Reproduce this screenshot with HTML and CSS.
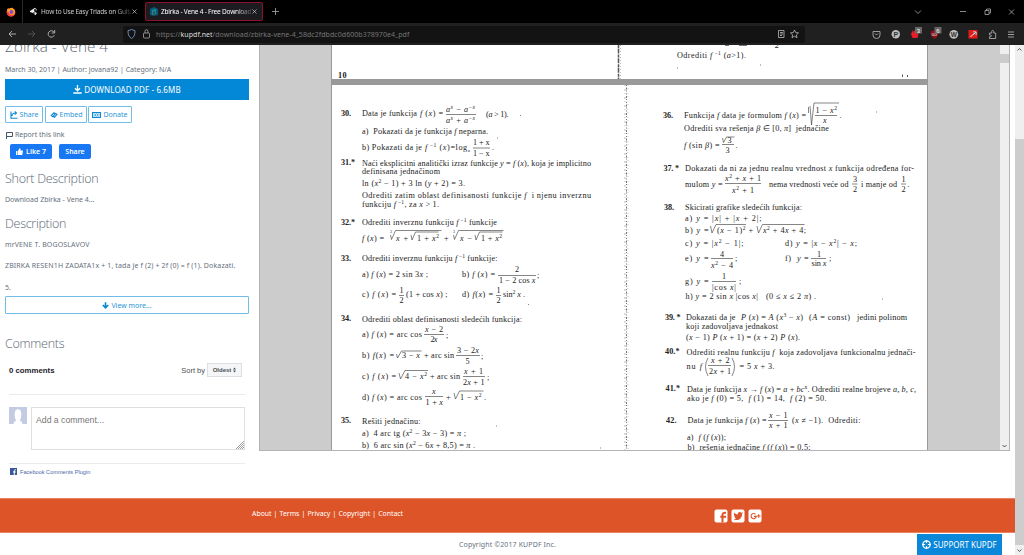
FILE: index.html
```html
<!DOCTYPE html>
<html lang="en">
<head>
<meta charset="utf-8">
<title>Zbirka - Vene 4 - Free Download PDF</title>
<link rel="stylesheet" href="styles.css">
</head>
<body>
<header class="tabs">
  <div class="fx"><svg width="10" height="10" viewBox="0 0 10 10"><circle cx="5" cy="5.2" r="4.3" fill="#ff7a1c"/><path d="M1 3 2 1l1.500 1.500L6 .6l3 3-.5 3-3 2.500-3.500-1z" fill="#ff9d1e"/><path d="M.8 5a4.300 4.300 0 0 0 8.500 1C8 9 3 9 2.500 5z" fill="#f5304c"/><circle cx="5.400" cy="5" r="1.900" fill="#8a45d8"/></svg></div>
  <div class="tab"><svg width="9" height="9" viewBox="0 0 9 9"><path d="M1 4 6 .8 8 3 5 4.500 8 6 6.500 8.300 4 6 1 5z" fill="#eee"/><circle cx="6" cy="3" r="1" fill="#000"/><circle cx="5" cy="6" r=".8" fill="#000"/></svg><span class="tab-title t1">How to Use Easy Triads on Guita</span><svg class="x" width="5" height="5" viewBox="0 0 5 5"><path d="M.5.5l4 4m0-4l-4 4"/></svg></div>
  <div class="tab active"><svg width="8" height="9" viewBox="0 0 8 9"><path d="M4 0 8 2v6L4 9 0 8V2z" fill="#075b73"/><path d="M2 3l4-1v5l-4 1z" fill="#148ba0"/><path d="M3 4h2v4H3z" fill="#4a4f4f"/></svg><span class="tab-title t2">Zbirka - Vene 4 - Free Download</span><svg class="x" width="5" height="5" viewBox="0 0 5 5"><path d="M.5.5l4 4m0-4l-4 4"/></svg></div>
  <svg class="plus" width="7" height="7" viewBox="0 0 7 7"><path d="M3.500 0v7M0 3.500h7"/></svg>
  <svg class="win" width="110" height="12" viewBox="0 0 110 12"><path d="M5 4.500l3 3 3-3M50 5.500h6M75 4.500h4v4h-4zM76.500 4.500v-1.500h4v4h-1.500M99 3.500l5 5m0-5l-5 5"/></svg>
</header>
<nav class="bar">
  <svg class="nav" width="60" height="12" viewBox="0 0 60 12"><path d="M16 6H9m3-3L9 6l3 3" stroke="#bbb"/><path d="M28 6h7m-3-3l3 3-3 3" stroke="#555"/><path d="M54 4.200A3.200 3.200 0 1 0 54.300 7.200M54.700 2v3h-3" stroke="#bbb"/></svg>
  <div class="url">
    <svg width="28" height="12" viewBox="0 0 28 12"><path d="M8.500 1.500 12 2.700C12 7 11 9 8.500 10.500 6 9 5 7 5 2.700z" stroke="#7fa6d6"/><rect x="20.500" y="5" width="6" height="5" rx=".8" stroke="#aaa"/><path d="M22 5V3.200a1.500 1.500 0 0 1 3 0V5" stroke="#aaa"/></svg>
    <span class="addr">https://<b>kupdf.net</b>/download/zbirka-vene-4_58dc2fdbdc0d600b378970e4_pdf</span>
    <svg class="urlend" width="26" height="12" viewBox="0 0 26 12"><path d="M2.500 2.500h5.500v7H2.500zM4 4.500h3M4 6h3M4 7.500h2M18.500 2l1.200 2.600 2.800.3-2.100 1.900.6 2.900-2.500-1.500L16 9.700l.6-2.900-2.100-1.900 2.800-.3z" stroke="#bbb"/></svg>
  </div>
  <svg class="ext" width="153" height="16" viewBox="0 0 153 16"><g fill="none" stroke="#aaa"><path d="M2 5.500h7V9a3.500 3.500 0 0 1-7 0zM4 7.500l1.500 1.500L7 7.500"/><path d="M118.500 7h2.200V5.500a1 1 0 0 1 2 0V7h2v5.500h-6.200v-1.800h1a.8.8 0 0 0 0-1.800h-1z"/><path d="M137 6h6M137 8.500h6M137 11h6"/></g><circle cx="24.800" cy="8.300" r="4.200" fill="#bbb"/><text x="22.600" y="11" font-size="7" fill="#333" font-weight="bold">P</text><path d="M40 8l2-4 1 3V4l2 2 1-1 1.500 3-1 4h-5z" fill="#e81c24"/><rect x="44" y="1" width="7" height="6.500" fill="#666"/><text x="45.800" y="6.500" font-size="6" fill="#fff">3</text><path d="M59.500 5.500 63.500 4l4 1.500c0 4-1.500 6-4 7.500-2.500-1.500-4-3.500-4-7.500z" fill="#8d1018"/><text x="60.600" y="10" font-size="5" fill="#ddd">uo</text><rect x="63.500" y="1" width="7" height="6.500" fill="#666"/><text x="65.300" y="6.500" font-size="6" fill="#fff">6</text><circle cx="82.800" cy="8.300" r="4.400" fill="#bbb"/><text x="79.700" y="10.700" font-size="6.500" fill="#333" font-weight="bold">W</text><rect x="97.500" y="4" width="9" height="8.500" fill="#e21c1c"/><path d="M99.500 11l3.500-3.500M102 6h3v3M102.500 8.500l2-2" stroke="#fff"/></svg>
</nav>
<div class="view">
 <div class="page">
  <main class="cols">
   <aside class="side">
    <h1>Zbirka - Vene 4</h1>
    <p class="meta">March 30, 2017 | Author: jovana92 | Category: N/A</p>
    <a class="dl"><svg width="9" height="9" viewBox="0 0 9 9"><path d="M4.500 0v5.500M2 3.300l2.500 2.500L7 3.300M.3 8h8.400" stroke="#fff" stroke-width="1.300" fill="none"/></svg><span>DOWNLOAD PDF - 6.6MB</span></a>
    <div class="btns">
     <a class="ob w1"><svg width="8" height="8" viewBox="0 0 8 8"><path d="M1 .5V7.300h6.500M2 5c0-2 1-3 3.500-3M4.700.5 6.500 2 4.700 3.700" stroke="#0a86d4" stroke-width="1.100" fill="none"/></svg><span>Share</span></a>
     <a class="ob w2"><svg width="8" height="8" viewBox="0 0 8 8"><path d="M1.300 4.500 4 1.800l1.300 1-2.500 3zM3.200 5.300 5.500 2.500l1.500.8-2.500 3z" stroke="#0a86d4" stroke-width="1.100" fill="none"/></svg><span>Embed</span></a>
     <a class="ob w3"><svg width="9" height="8" viewBox="0 0 9 8"><rect x=".5" y="1.500" width="8" height="5" stroke="#0a86d4" fill="none"/><circle cx="4.500" cy="4" r="1.300" stroke="#0a86d4" stroke-width=".8" fill="none"/><path d="M2 2v4M7 2v4" stroke="#0a86d4" stroke-width=".6"/></svg><span>Donate</span></a>
    </div>
    <p class="report"><svg width="8" height="8" viewBox="0 0 8 8"><path d="M1.500 8V1.500h6v4h-6" stroke="#44546b" fill="none"/></svg><span>Report this link</span></p>
    <div class="fb"><a class="like"><svg width="7" height="7" viewBox="0 0 7 7"><path d="M0 3h1.500v4H0zM2 3 3.500.3l1 .2V2.500H7L6.300 7H2z" fill="#fff"/></svg><span>Like 7</span></a><a class="shr">Share</a></div>
    <h2 class="h-a">Short Description</h2>
    <p class="p-a">Download Zbirka - Vene 4...</p>
    <h2 class="h-b">Description</h2>
    <p class="p-b">mrVENE T. BOGOSLAVOV</p>
    <p class="p-c">ZBIRKA RESEN1H ZADATA1x + 1, tada je f (2) + 2f (0) = f (1). Dokazati.</p>
    <p class="p-d">5.</p>
    <a class="more"><svg width="7" height="7" viewBox="0 0 7 7"><path d="M3.500.3v5M.8 3l2.700 2.800L6.200 3" stroke="#0a86d4" stroke-width="1.600" fill="none"/></svg><span>View more...</span></a>
    <h2 class="h-c">Comments</h2>
    <section class="fbc">
     <div class="chead"><b>0 comments</b><span class="sort">Sort by</span><span class="sel">Oldest <svg width="3" height="6" viewBox="0 0 3 6"><path d="M0 2.500 1.500.5 3 2.500zM0 3.500h3L1.500 5.500z" fill="#4b4f56"/></svg></span></div>
     <div class="cbox"><svg width="18" height="17" viewBox="0 0 18 17"><path fill="#c3cbe2" d="M0 0h18v17H0z"/><path d="M4.500 17c.3-2 1-2.500 2.500-3.500C5 9 5 2.300 9 2.300S13 9 11 13.500c1.500 1 2.200 1.500 2.500 3.500z" fill="#fff"/></svg><div class="ta">Add a comment...<svg width="8" height="8" viewBox="0 0 8 8"><path d="M0 8l8-8M2 8l6-6M4 8l4-4M6 8l2-2" stroke="#888" stroke-width=".8"/></svg></div></div>
     <div class="plug"><svg width="7" height="7" viewBox="0 0 7 7"><path fill="#3b5998" d="M0 0h7v7H0z"/><path d="M4.300 7V2.700q0-1 1.500-1M3 4h2.800" stroke="#fff" fill="none"/></svg><span>Facebook Comments Plugin</span></div>
    </section>
   </aside>
   <section class="viewer">
    <div class="sheets">
     <svg class="sheet top" width="595" height="34" viewBox="332 45 595 34">
      <text x="338" y="78" class="b" textLength="8.500">10</text>
      <text x="677" y="58" textLength="69">Odrediti <tspan class="i">f</tspan><tspan class="s"> −1</tspan> (<tspan class="i">a</tspan>&gt;1).</text>
      <text x="775" y="48" class="i">2</text>
      <path d="M902.500 74.500v2.500M907.500 75v2" stroke="#555"/>
      <path d="M618.500 45v34" stroke="#555" stroke-width="1.500" stroke-dasharray="3 .6 5 1"/><path d="M620.500 45v34" stroke="#bbb" stroke-dasharray="1 2"/>
      <path d="M725 45.500h4M739 45.500h8M760 65h1M677 68h1" stroke="#777"/>
     </svg>
     <svg class="sheet" width="595" height="366" viewBox="332 85 595 366">
      <g class="spine"><path d="M626.500 85v366" stroke="#777" stroke-dasharray="1 1.500 2 1 1 2"/><path d="M625 85v366" stroke="#bbb" stroke-dasharray="1 3 2 2"/><path d="M628 85v366" stroke="#ccc" stroke-dasharray="1 2 1 4"/></g>
      <g class="b">
       <text x="341" y="116" textLength="10">30.</text><text x="341" y="165" textLength="14">31.*</text><text x="341" y="225" textLength="14">32.*</text><text x="341" y="261" textLength="10">33.</text><text x="341" y="321" textLength="10">34.</text><text x="341" y="423" textLength="10">35.</text>
       <text x="663" y="118" textLength="10">36.</text><text x="663.500" y="171" textLength="15.500">37. *</text><text x="664" y="210" textLength="10">38.</text><text x="665" y="320" textLength="15.500">39. *</text><text x="665" y="354" textLength="14.500">40.*</text><text x="665.500" y="391" textLength="14.500">41.*</text><text x="666" y="423" textLength="10.500">42.</text>
      </g>
      <text x="362" y="116" textLength="55">Data je funkcija</text><text x="420" y="116" textLength="23"><tspan class="i">f</tspan> (<tspan class="i">x</tspan>) =</text>
      <text x="446" y="111.500" class="i" textLength="29">a<tspan class="s">x</tspan> − a<tspan class="s">−x</tspan></text><text x="446" y="123" class="i" textLength="29">a<tspan class="s">x</tspan> + a<tspan class="s">−x</tspan></text>
      <text x="486" y="117" textLength="22.500">(<tspan class="i">a</tspan> &gt; 1).</text>
      <text x="362" y="133.500" textLength="126">a)&#160; Pokazati da je funkcija <tspan class="i">f</tspan> neparna.</text>
      <text x="362" y="150" textLength="60">b) Pokazati da je</text><text x="425" y="150" textLength="45"><tspan class="i">f</tspan><tspan class="s"> −1</tspan> (<tspan class="i">x</tspan>)=log<tspan class="u">a</tspan></text>
      <text x="473" y="144.500" textLength="16.500">1 + x</text><text x="473" y="155.500" textLength="16.500">1 − x</text><text x="492" y="150">.</text>
      <text x="362" y="165.500" textLength="229">Naći eksplicitni analitički izraz funkcije <tspan class="i">y</tspan> = <tspan class="i">f</tspan> (<tspan class="i">x</tspan>), koja je implicitno</text>
      <text x="362" y="174" textLength="78">definisana jednačinom</text>
      <text x="362" y="186" textLength="103">ln (<tspan class="i">x</tspan><tspan class="s">2</tspan> − 1) + 3 ln (<tspan class="i">y</tspan> + 2) = 3.</text>
      <text x="362" y="197.500" textLength="229">Odrediti zatim oblast definisanosti funkcije <tspan class="i">f</tspan>&#160; i njenu inverznu</text>
      <text x="362" y="207" textLength="77">funkciju <tspan class="i">f</tspan><tspan class="s"> −1</tspan>, za <tspan class="i">x</tspan> &gt; 1.</text>
      <text x="362" y="225" textLength="135">Odrediti inverznu funkciju <tspan class="i">f</tspan><tspan class="s"> −1</tspan> funkcije</text>
      <text x="362" y="240.500" textLength="22"><tspan class="i">f</tspan> (<tspan class="i">x</tspan>) =</text>
      <text x="396" y="240.500" textLength="12"><tspan class="i">x</tspan> +</text><text x="417" y="240.500" textLength="22">1 + <tspan class="i">x</tspan><tspan class="s">2</tspan></text><text x="444" y="240.500">+</text><text x="460" y="240.500" textLength="12"><tspan class="i">x</tspan> −</text><text x="481" y="240.500" textLength="21">1 + <tspan class="i">x</tspan><tspan class="s">2</tspan></text>
      <text x="390" y="233" class="n">3</text><text x="453" y="233" class="n">3</text>
      <text x="362" y="261" textLength="135.500">Odrediti inverznu funkciju <tspan class="i">f</tspan><tspan class="s"> −1</tspan> funkcije:</text>
      <text x="362" y="276.500" textLength="66">a) <tspan class="i">f</tspan> (<tspan class="i">x</tspan>) = 2 sin 3<tspan class="i">x</tspan> ;</text>
      <text x="462" y="276.500" textLength="33">b) <tspan class="i">f</tspan> (<tspan class="i">x</tspan>) =</text><text x="515" y="272">2</text><text x="499" y="282.500" textLength="36.500">1 − 2 cos <tspan class="i">x</tspan></text><text x="537" y="278">;</text>
      <text x="362" y="297" textLength="34">c) <tspan class="i">f</tspan> (<tspan class="i">x</tspan>) =</text><text x="399.500" y="292.500">1</text><text x="399.500" y="302.500">2</text><text x="406" y="297" textLength="41.500">(1 + cos <tspan class="i">x</tspan>) ;</text>
      <text x="462" y="297" textLength="31">d) <tspan class="i">f</tspan>(<tspan class="i">x</tspan>) =</text><text x="496.500" y="292.500">1</text><text x="496.500" y="302.500">2</text><text x="503" y="297" textLength="22">sin<tspan class="s">2</tspan> <tspan class="i">x</tspan> .</text>
      <text x="362" y="321.500" textLength="160">Odrediti oblast definisanosti sledećih funkcija:</text>
      <text x="362" y="337" textLength="60">a) <tspan class="i">f</tspan> (<tspan class="i">x</tspan>) = arc cos</text><text x="425" y="331.500" textLength="18"><tspan class="i">x</tspan> − 2</text><text x="430.500" y="342" textLength="7">2<tspan class="i">x</tspan></text><text x="446" y="338">;</text>
      <text x="362" y="358" textLength="32">b) <tspan class="i">f</tspan>(<tspan class="i">x</tspan>) =</text><text x="402" y="358" textLength="18">3 − <tspan class="i">x</tspan></text><text x="424" y="358" textLength="30">+ arc sin</text><text x="457" y="353" textLength="22">3 − 2<tspan class="i">x</tspan></text><text x="465.500" y="363.500">5</text><text x="481" y="358.500">;</text>
      <text x="362" y="379" textLength="34">c) <tspan class="i">f</tspan> (<tspan class="i">x</tspan>) =</text><text x="405" y="379" textLength="22">4 − <tspan class="i">x</tspan><tspan class="s">2</tspan></text><text x="430" y="379" textLength="30">+ arc sin</text><text x="464" y="374" textLength="19"><tspan class="i">x</tspan> + 1</text><text x="463" y="384.500" textLength="21.500">2<tspan class="i">x</tspan> + 1</text><text x="487" y="380">;</text>
      <text x="362" y="399.500" textLength="60">d) <tspan class="i">f</tspan> (<tspan class="i">x</tspan>) = arc cos</text><text x="432" y="394" class="i">x</text><text x="425.500" y="404.500" textLength="17.500">1 + <tspan class="i">x</tspan></text><text x="446" y="399.500">+</text><text x="460" y="399.500" textLength="21.500">1 − <tspan class="i">x</tspan><tspan class="s">2</tspan></text><text x="484" y="399.500">.</text>
      <text x="362" y="423.500" textLength="58.500">Rešiti jednačinu:</text>
      <text x="362" y="436" textLength="104">a)&#160; 4 arc tg (<tspan class="i">x</tspan><tspan class="s">2</tspan> − 3<tspan class="i">x</tspan> − 3) = <tspan class="i">π</tspan> ;</text>
      <text x="362" y="448" textLength="113">b)&#160; 6 arc sin (<tspan class="i">x</tspan><tspan class="s">2</tspan> − 6<tspan class="i">x</tspan> + 8,5) = <tspan class="i">π</tspan> .</text>

      <text x="684" y="118" textLength="122">Funkcija <tspan class="i">f</tspan> data je formulom <tspan class="i">f</tspan> (<tspan class="i">x</tspan>) =</text><text x="815.500" y="112.500" textLength="21.500">1 − <tspan class="i">x</tspan><tspan class="s">2</tspan></text><text x="823" y="122.500" class="i">x</text><text x="839.500" y="118">.</text>
      <text x="684" y="131" textLength="145">Odrediti sva rešenja <tspan class="i">β</tspan> ∈ [0, <tspan class="i">π</tspan>]&#160; jednačine</text>
      <text x="684" y="148" textLength="35.500"><tspan class="i">f</tspan> (sin <tspan class="i">β</tspan>) =</text><text x="727.500" y="143">3</text><text x="725.500" y="152.500">3</text><text x="735.500" y="148">.</text>
      <text x="685" y="171" textLength="229">Dokazati da ni za jednu realnu vrednost <tspan class="i">x</tspan> funkcija određena for-</text>
      <text x="685" y="186.500" textLength="37.500">mulom <tspan class="i">y</tspan> =</text><text x="725" y="181" textLength="36"><tspan class="i">x</tspan><tspan class="s">2</tspan> + <tspan class="i">x</tspan> + 1</text><text x="732" y="193" textLength="22"><tspan class="i">x</tspan><tspan class="s">2</tspan> + 1</text>
      <text x="769" y="186.500" textLength="79.500">nema vrednosti veće od</text><text x="853" y="181.500">3</text><text x="853" y="191.500">2</text><text x="861" y="186.500" textLength="36">i manje od</text><text x="901.500" y="181.500">1</text><text x="901.500" y="191.500">2</text><text x="907.500" y="186.500">.</text>
      <text x="685" y="210" textLength="117">Skicirati grafike sledećih funkcija:</text>
      <text x="685" y="221" textLength="76.500">a) <tspan class="i">y</tspan> = |<tspan class="i">x</tspan>| + |<tspan class="i">x</tspan> + 2|;</text>
      <text x="685" y="233" textLength="23.500">b) <tspan class="i">y</tspan> =</text><text x="717" y="233" textLength="28.500">(<tspan class="i">x</tspan> − 1)<tspan class="s">2</tspan></text><text x="748.500" y="233">+</text><text x="763" y="233" textLength="43"><tspan class="i">x</tspan><tspan class="s">2</tspan> + 4<tspan class="i">x</tspan> + 4;</text>
      <text x="685" y="245.500" textLength="58.500">c) <tspan class="i">y</tspan> = |<tspan class="i">x</tspan><tspan class="s">2</tspan> − 1|;</text><text x="785" y="245.500" textLength="72">d) <tspan class="i">y</tspan> = |<tspan class="i">x</tspan> − <tspan class="i">x</tspan><tspan class="s">2</tspan>| − <tspan class="i">x</tspan>;</text>
      <text x="685" y="261" textLength="23.500">e) <tspan class="i">y</tspan> =</text><text x="720" y="256.500">4</text><text x="711" y="267.500" textLength="22"><tspan class="i">x</tspan><tspan class="s">2</tspan> − 4</text><text x="735" y="261">;</text>
      <text x="785" y="261" textLength="23.500">f)&#160; <tspan class="i">y</tspan> =</text><text x="817" y="256.500">1</text><text x="811.500" y="266" textLength="15">sin <tspan class="i">x</tspan></text><text x="829" y="261">;</text>
      <text x="685" y="284" textLength="23.500">g) <tspan class="i">y</tspan> =</text><text x="722" y="278.500">1</text><text x="712" y="289.500" textLength="24">|cos <tspan class="i">x</tspan>|</text><text x="739" y="284">;</text>
      <text x="685.500" y="299" textLength="72.500">h) <tspan class="i">y</tspan> = 2 sin <tspan class="i">x</tspan> |cos <tspan class="i">x</tspan>|</text><text x="766" y="299" textLength="50">(0 ≤ <tspan class="i">x</tspan> ≤ 2 <tspan class="i">π</tspan>) .</text>
      <text x="686" y="320" textLength="49.500">Dokazati da je</text><text x="741" y="320" textLength="62"><tspan class="i">P</tspan> (<tspan class="i">x</tspan>) = <tspan class="i">A</tspan> (<tspan class="i">x</tspan><tspan class="s">3</tspan> − <tspan class="i">x</tspan>)</text><text x="809" y="320" textLength="41">(<tspan class="i">A</tspan> = const)</text><text x="857" y="320" textLength="50">jedini polinom</text>
      <text x="686" y="328.500" textLength="92">koji zadovoljava jednakost</text>
      <text x="686" y="339.500" textLength="114">(<tspan class="i">x</tspan> − 1) <tspan class="i">P</tspan> (<tspan class="i">x</tspan> + 1) = (<tspan class="i">x</tspan> + 2) <tspan class="i">P</tspan> (<tspan class="i">x</tspan>).</text>
      <text x="686.500" y="354.500" textLength="229">Odrediti realnu funkciju <tspan class="i">f</tspan>&#160; koja zadovoljava funkcionalnu jednači-</text>
      <text x="686.500" y="368.500" textLength="15.500">nu <tspan class="i">f</tspan></text><text x="711" y="362.500" textLength="18.500"><tspan class="i">x</tspan> + 2</text><text x="709" y="373.500" textLength="22">2<tspan class="i">x</tspan> + 1</text><text x="739.500" y="368.500" textLength="35">= 5 <tspan class="i">x</tspan> + 3.</text>
      <text x="687" y="391.500" textLength="229">Data je funkcija <tspan class="i">x</tspan> → <tspan class="i">f</tspan> (<tspan class="i">x</tspan>) = <tspan class="i">a</tspan> + <tspan class="i">bc</tspan><tspan class="s">x</tspan>. Odrediti realne brojeve <tspan class="i">a, b, c,</tspan></text>
      <text x="687" y="400.500" textLength="139.500">ako je <tspan class="i">f</tspan> (0) = 5,&#160; <tspan class="i">f</tspan> (1) = 14,&#160; <tspan class="i">f</tspan> (2) = 50.</text>
      <text x="687.500" y="423" textLength="79">Data je funkcija <tspan class="i">f</tspan> (<tspan class="i">x</tspan>) =</text><text x="769" y="418" textLength="18.500"><tspan class="i">x</tspan> − 1</text><text x="769" y="428" textLength="18.500"><tspan class="i">x</tspan> + 1</text><text x="792" y="423" textLength="68.500">(<tspan class="i">x</tspan> ≠ −1).&#160; Odrediti:</text>
      <text x="687" y="439.500" textLength="39">a)&#160; <tspan class="i">f</tspan> (<tspan class="i">f</tspan> (<tspan class="i">x</tspan>));</text>
      <text x="687.500" y="449.500" textLength="123">b)&#160; rešenja jednačine <tspan class="i">f</tspan> (<tspan class="i">f</tspan> (<tspan class="i">x</tspan>)) = 0,5;</text>
      <g class="rules">
       <path d="M446 114.500h30M473 148h17M498 275.500h38M399 295.500h5M496 295.500h5M424 334.500h20M456 355.500h24M463 376.500h22M425 396.500h18M815 115.500h22M722 144.500h12M725 183.500h36M852 184h5.500M901 184h5M711 258.500h22M811 258.500h15M712 281.500h24M708 365.500h23M768 420.500h20"/>
       <path d="M390.500 235l1 4.500 4-9h46M411 235l1 5 3.500-8h23M453.500 235l1 4.500 4-9h45M475 235l1 5 3.500-8h23M396.500 354l1 4 4-7h20M399 373l1.500 6 4.500-8.500h23M454 393l1.500 6 4-8h24M710.500 226l1.500 7 4-8.500h30M757 226l1.500 7 4-8.500h42M808.500 107v6M810 106l1.500 19 2.500-22h25M722.500 138l1 4.500 3-5.500h8"/>
       <path d="M708 358q-5 8.500 0 18M732 358q5 8.500 0 18"/>
       <path d="M528 304.500h1M520 115.500h1M497 138h1M496 426h1M882 299h1M600 448h1M876 112h1"/>
      </g>
     </svg>
    </div>
    <div class="vsb"><i></i><svg width="9" height="8" viewBox="0 0 9 8"><path d="M2.500 3l2 2 2-2" stroke="#555" fill="none"/></svg></div>
   </section>
  </main>
  <footer>
   <div class="orange"><nav class="links"><a>About</a><s>|</s><a>Terms</a><s>|</s><a>Privacy</a><s>|</s><a>Copyright</a><s>|</s><a>Contact</a></nav>
    <svg width="48" height="14" viewBox="0 0 48 14"><rect x=".5" y=".5" width="13" height="13" rx="2" fill="#fff"/><path d="M8.500 13.500V5.500Q8.500 3.500 12 3.700M6.300 7.700H12" stroke="#dd5428" stroke-width="2" fill="none"/><rect x="17.500" y=".5" width="13" height="13" rx="2" fill="#fff"/><path d="M19.800 3.500q1.800 2 4 2c-.2-2.500 2.500-3 3.500-1.800l1.700-.5-1 1.700c.3 5-5 7.500-8.500 5.200 1.300 0 2-.4 2.500-.9-1.300-.3-1.600-1.200-1.600-1.500h.8c-1-.6-1.300-1.400-1.200-2.200z" fill="#dd5428"/><rect x="34.500" y=".5" width="13" height="13" rx="2" fill="#fff"/><path d="M41.500 5.200a2.600 2.600 0 1 0 .8 2.200h-2.500M43 7h3.500M44.700 5.300v3.500" stroke="#dd5428" stroke-width="1.100" fill="none"/></svg>
   </div>
   <div class="copy"><span class="ctext">Copyright ©2017 KUPDF Inc.</span><a class="support"><svg width="9" height="9" viewBox="0 0 9 9"><circle cx="4.500" cy="4.500" r="3.700" fill="none" stroke="#fff" stroke-width="1.300"/><path d="M4.500 0v9M0 4.500h9" stroke="#fff" stroke-width="1.200"/><circle cx="4.500" cy="4.500" r="1.400" fill="#0a87d8"/></svg><b>SUPPORT KUPDF</b></a></div>
  </footer>
 </div>
 <div class="psb"><svg width="9" height="9" viewBox="0 0 9 9"><path d="M2.500 5.500l2-2 2 2" stroke="#555" fill="none"/></svg><i></i><svg width="9" height="9" viewBox="0 0 9 9"><path d="M2.500 3.500l2 2 2-2" stroke="#555" fill="none"/></svg></div>
</div>
</body>
</html>
```
FILE: styles.css
```css
*{box-sizing:border-box}
body{margin:0;width:1024px;height:555px;overflow:hidden;background:#fff;font-family:"Noto Sans","Open Sans",sans-serif;font-size:7px;color:#66707d}
h1,h2,p{margin:0;font-weight:400;white-space:nowrap}
svg{display:block;flex:none}
span,a{white-space:nowrap}

.tabs{height:23px;background:#000;display:flex;align-items:center;color:#ccc}
.fx{width:23px;height:23px;border-right:1px solid #2a2a2a;padding:7px 0 0 6px}
.tab{display:flex;align-items:center;width:118px;height:19px;padding-left:6px;margin-right:4px}
.tab.active{border:1px solid #8e1230;background:#1c1b20;border-radius:2px;padding-left:4px;color:#fff}
.tab-title{margin-left:3px;width:90px;font-size:6.500px;letter-spacing:-.2px;-webkit-mask-image:linear-gradient(90deg,#000 82%,rgba(0,0,0,.2))}
.x{margin-left:1px;stroke:#ccc;stroke-width:.7}
.plus{margin-left:5px;stroke:#aaa;stroke-width:.8}
.win{margin-left:auto;fill:none;stroke:#aaa;stroke-width:.8;margin-right:4px}
.bar{height:22px;background:#202020;display:flex;align-items:center}
.nav{fill:none;stroke-width:.9}
.url{margin-left:63px;width:682px;height:17px;background:#131313;border-radius:2px;display:flex;align-items:center;fill:none;stroke-width:.8;color:#757575}
.addr{margin-left:5px;letter-spacing:.05px}
.addr b{font-weight:400;color:#ddd}
.urlend{margin-left:auto;margin-right:3px}
.ext{margin-left:66px;font-family:"Liberation Sans",sans-serif;stroke-width:.9}

.view{display:flex;height:510px;overflow:hidden}
.page{width:1015px;height:510px}
.cols{display:flex;height:453px}
.side{width:259px;height:453px;padding-left:5px}
h1{height:18px;font-family:"Open Sans",sans-serif;font-weight:300;font-size:15.300px;line-height:18px;margin-top:-8px;color:#5d6875}
.meta{height:24px;line-height:29px;font-size:7px;letter-spacing:-.02px}
.dl{display:flex;align-items:center;justify-content:center;gap:2px;width:244px;height:21px;background:#0388d8;color:#fff;font-size:8px;letter-spacing:.13px}
.btns{display:flex;gap:2px;margin-top:6px}
.ob{display:flex;align-items:center;justify-content:center;gap:2px;height:17px;border:1px solid #72bce8;color:#2c96d8;border-radius:1px}
.w1{width:38px}.w2{width:42px}.w3{width:44px;margin-left:-1px}
.report{display:flex;align-items:center;gap:2px;height:11px;margin-top:6px}
.fb{display:flex;gap:7px;margin:4px 0 0 5px;color:#fff;font-weight:600}
.fb a{display:flex;align-items:center;justify-content:center;gap:3px;height:15px;background:#1877f2;border-radius:2px}
.like{width:42px}.shr{width:32px}
h2{font-family:"Open Sans",sans-serif;font-weight:300;font-size:12.500px;height:16px;line-height:16px;color:#5d6875;letter-spacing:-.28px}
.h-a{margin-top:12px}
.p-a,.p-b,.p-c,.p-d{height:10px;line-height:10px}
.p-a{margin-top:8px}
.h-b{margin-top:11px}
.p-b{margin-top:8px;letter-spacing:.14px}
.p-c{margin-top:11px;letter-spacing:.13px}
.p-d{margin-top:12px}
.more{display:flex;align-items:center;justify-content:center;gap:2px;width:244px;height:18px;margin-top:3px;border:1px solid #72bce8;border-radius:1px;color:#2c96d8}
.h-c{margin-top:22px}
.fbc{margin-left:4px;width:236px;margin-top:12px;font-family:"Liberation Sans",sans-serif;color:#4b4f56}
.chead{display:flex;align-items:center;height:31px;padding-bottom:18px;border-bottom:1px solid #e9ebee;font-size:7.800px}
.chead b{color:#1d2129}
.sort{margin-left:auto;margin-right:2px;font-size:7.500px}
.sel{display:flex;align-items:center;justify-content:center;gap:2px;width:35px;height:14px;border:1px solid #dcdee3;background:#f5f6f7;font-size:6px;font-weight:700;margin-right:3px}
.cbox{display:flex;gap:4px;height:69px;padding-top:12px;border-bottom:1px solid #e9ebee}
.ta{position:relative;width:214px;height:43px;border:1px solid #dddfe2;padding:8px 4px;font-size:8.700px;line-height:9px;color:#777}
.ta svg{position:absolute;right:0;bottom:0}
.plug{display:flex;align-items:center;gap:3px;margin-top:4px;padding-left:1px;font-size:5.600px;color:#4967a8}

.viewer{display:flex;width:751px;height:406px;background:#ccc;border:1px solid #b4b4b4;border-top:0}
.sheets{width:597px;margin-left:71px;padding-left:1px;background:#999;display:flex;flex-direction:column;gap:6px;overflow:hidden}
.sheet{background:#fff;font-family:"Liberation Serif",serif;font-size:8.200px;fill:#222}
.i{font-style:italic}
.b{font-weight:700}
.s{font-size:5.600px;baseline-shift:3px}
.u{font-size:5px;baseline-shift:-1.500px}
.n{font-size:4px}
.rules{fill:none;stroke:#333;stroke-width:.6}
.vsb{display:flex;flex-direction:column;justify-content:space-between;width:9px;margin-left:auto;background:#efefef}
.vsb i{height:9px;margin-top:9px;background:#ccc}

.orange{display:flex;align-items:center;height:35px;background:#dd5428;color:#fff;border-top:1px solid #e9835f;border-bottom:1px solid #e9835f}
.links{display:flex;margin-left:252px;width:462px;padding-bottom:4px;font-size:6.900px}
.links s{text-decoration:none;margin:0 3px 0 2px;width:3px}
.copy{display:flex;height:22px;justify-content:space-between;align-items:center;padding:0 13px 0 459px}
.ctext{letter-spacing:.12px}
.support{display:flex;align-items:center;justify-content:center;gap:2px;width:85px;height:22px;margin-top:1px;background:#0a87d8;color:#fff;font-size:8px}
.support b{font-weight:400}
.psb{display:flex;flex-direction:column;width:9px;height:510px;background:#efefef}
.psb i{height:406px;margin-top:85px;background:#cdcdcd;margin-bottom:1px}
```
